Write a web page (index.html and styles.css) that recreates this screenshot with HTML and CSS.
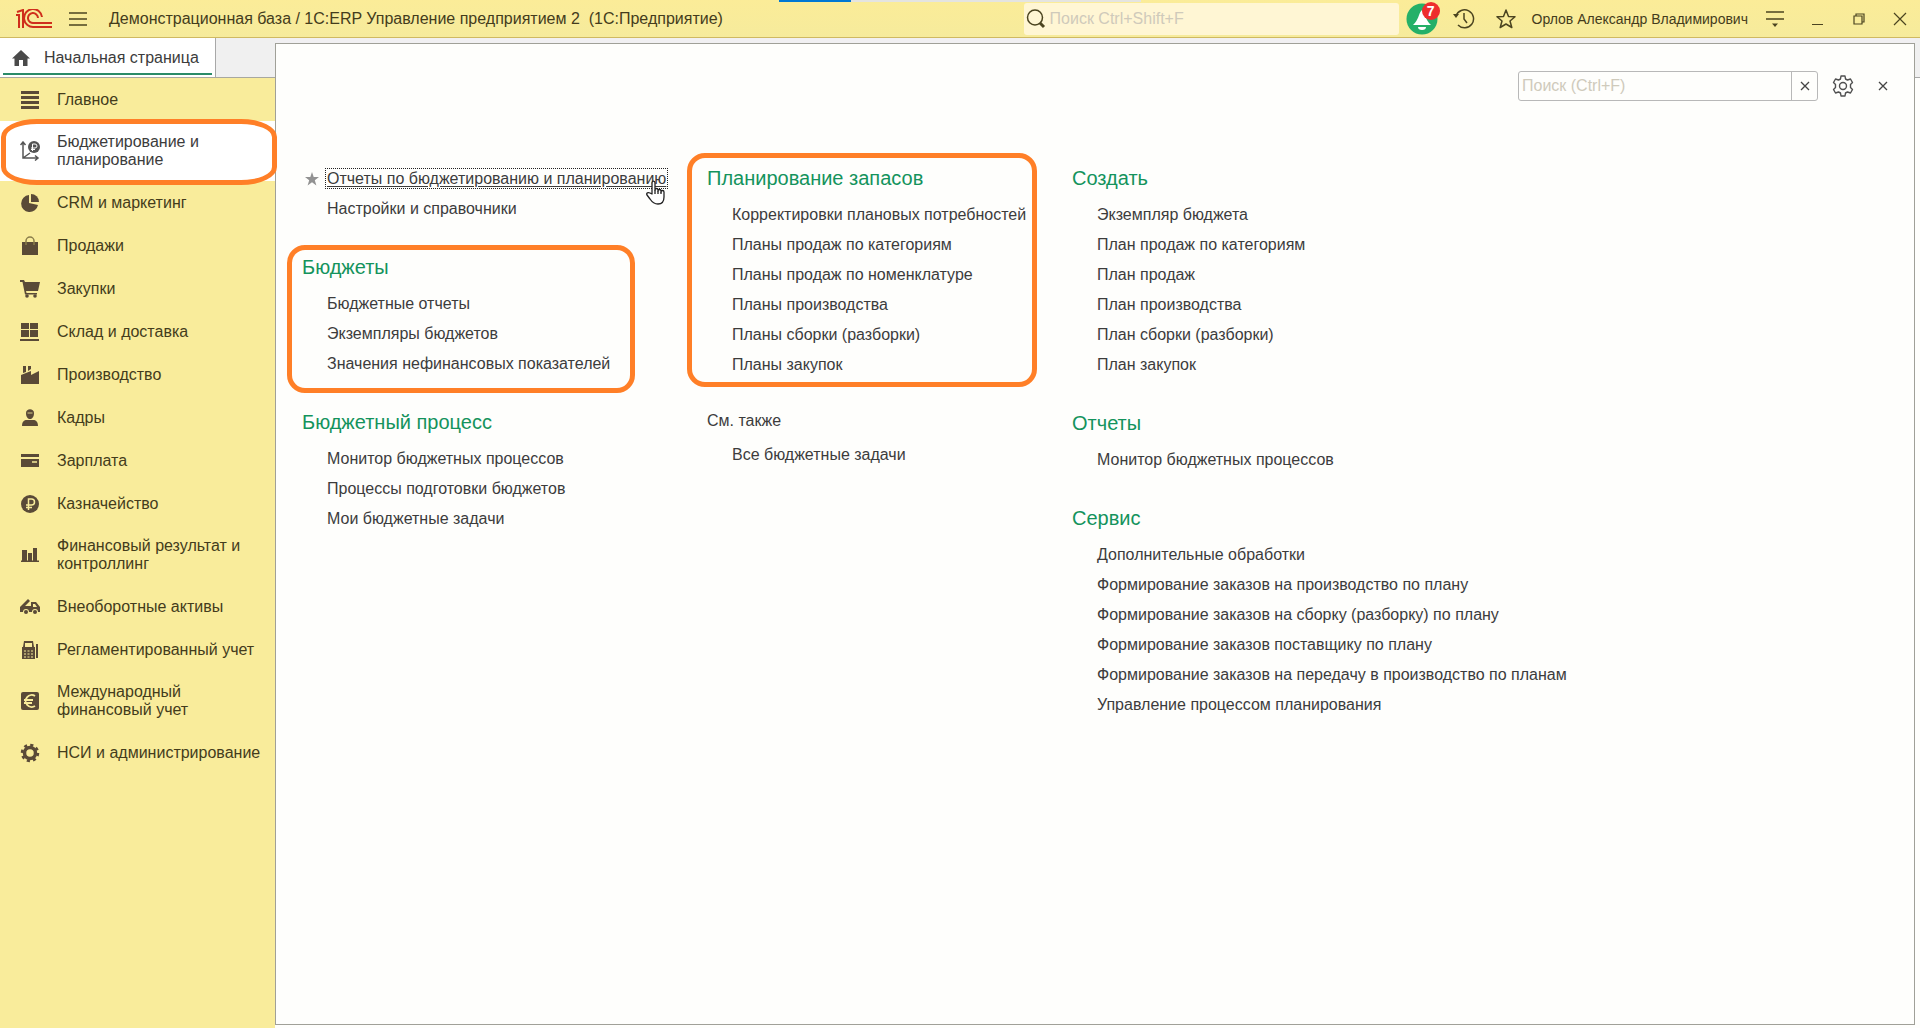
FILE: index.html
```html
<!DOCTYPE html>
<html lang="ru">
<head>
<meta charset="utf-8">
<title>1С:ERP Управление предприятием 2</title>
<link rel="stylesheet" href="styles.css">
</head>
<body>
<header class="topbar">
  <svg class="logo" width="36" height="20" viewBox="0 0 36 20" fill="none" stroke="#cf2e1c" stroke-width="2"><path d="M0 6H3V19M1 3L7 1V19" /><path d="M26 8A9 9 0 1 0 18 18H36M22 9A5 5 0 1 0 18 14H36"/></svg>
  <button class="icon-btn burger" aria-label="Меню"><svg width="20" height="16" viewBox="0 0 20 16" stroke="#4b4420" stroke-width="1.3"><path d="M1 2H19M1 8H19M1 14H19"/></svg></button>
  <h1 class="app-title">Демонстрационная база / 1С:ERP Управление предприятием 2&nbsp; (1С:Предприятие)</h1>
  <div class="progress" aria-hidden="true"></div>
  <label class="global-search">
    <svg width="20" height="20" viewBox="0 0 20 20" fill="none" stroke="#4b4420"><circle cx="9" cy="8.500" r="7.500" stroke-width="1.500"/><path d="M14 14L18 18" stroke-width="3"/></svg>
    <input type="text" placeholder="Поиск Ctrl+Shift+F" aria-label="Поиск">
  </label>
  <button class="icon-btn bell" aria-label="Уведомления"><svg width="32" height="32" viewBox="0 0 32 32"><circle cx="16" cy="16" r="15.500" fill="#24b068"/><path d="M16 7C12 11 13 17 7 22H25C19 17 20 11 16 7Z" fill="#fff"/><path d="M12 24H20A4 3 0 0 1 12 24Z" fill="#fff"/></svg><span class="badge">7</span></button>
  <button class="icon-btn" aria-label="История"><svg width="22" height="22" viewBox="0 0 22 22" fill="none" stroke="#4b4420" stroke-width="1.500"><path d="M3 8A9 9 0 1 1 5 17"/><path d="M11 5V11L14 15"/><path d="M0 6L6 6L3 10Z" fill="#4b4420" stroke="none"/></svg></button>
  <button class="icon-btn" aria-label="Избранное"><svg width="20" height="20" viewBox="0 0 20 20" fill="none" stroke="#4b4420" stroke-width="1.500" stroke-linejoin="round"><path d="M10 1L12.500 7.400L19 7.700L14 12L15.800 18.500L10 15L4.200 18.500L6 12L1 7.700L7.500 7.400Z"/></svg></button>
  <span class="user">Орлов Александр Владимирович</span>
  <button class="icon-btn" aria-label="Сервис и настройки"><svg width="20" height="18" viewBox="0 0 20 18" stroke="#4b4420" stroke-width="1.500"><path d="M1 2H19M1 9H19"/><path d="M7 13.500H13L10 17Z" fill="#4b4420" stroke="none"/></svg></button>
  <button class="icon-btn" aria-label="Свернуть"><svg width="12" height="12" viewBox="0 0 12 12" stroke="#4b4420"><path d="M1 11.500H12"/></svg></button>
  <button class="icon-btn" aria-label="Развернуть"><svg width="12" height="12" viewBox="0 0 12 12" fill="none" stroke="#4b4420" stroke-width="1.200"><path d="M1 3H9V11H1ZM3 3V1H11V9H9"/></svg></button>
  <button class="icon-btn window-close" aria-label="Закрыть окно"><svg width="14" height="14" viewBox="0 0 14 14" stroke="#4b4420" stroke-width="1.200"><path d="M1 1L13 13M13 1L1 13"/></svg></button>
</header>

<div class="workspace">
  <aside class="side">
    <div class="tabs">
      <a class="tab" href="#"><svg width="18" height="16" viewBox="0 0 18 16" fill="#4a4a4a"><path d="M9 0L18 8.500H15.500V16H11V10H7V16H2.500V8.500H0Z"/></svg><span>Начальная страница</span></a>
    </div>
    <nav class="sections">
      <a href="#"><svg viewBox="0 0 20 20"><path d="M1 1H19V4H1ZM1 6H19V9H1ZM1 11H19V14H1ZM1 16H19V19H1Z"/></svg><span>Главное</span></a>
      <a href="#" class="current marked"><svg viewBox="0 0 20 20"><path d="M3 1V17H17M0.500 4L3 1L5.500 4M15 14.500L18 17L15 19.500M3 17L10 12" fill="none" stroke="#555" stroke-width="1.500"/><circle cx="14" cy="6" r="6"/><path d="M12.500 10V3H15A2 2 0 0 1 15 7H11M11 8.500H15" fill="none" stroke="#fff"/></svg><span>Бюджетирование и планирование</span></a>
      <a href="#"><svg viewBox="0 0 20 20"><path d="M9 2A8.500 8.500 0 1 0 18 12L9 10Z"/><path d="M11 1A8 8 0 0 1 19 9H11Z"/></svg><span>CRM и маркетинг</span></a>
      <a href="#"><svg viewBox="0 0 20 20"><path d="M2 6H18V19H2Z"/><path d="M6 9V5A4 4 0 0 1 14 5V9" fill="none" stroke="#8a7d4a" stroke-width="1.500"/></svg><span>Продажи</span></a>
      <a href="#"><svg viewBox="0 0 20 20"><path d="M0 1H4L5 3H20L18 12H6L6.500 14H17V15.500H5L2.500 3H0Z"/><circle cx="7" cy="17" r="1.800"/><circle cx="15" cy="17" r="1.800"/></svg><span>Закупки</span></a>
      <a href="#"><svg viewBox="0 0 20 20"><path d="M1 1H9V7H1ZM10 1H18V7H10ZM1 8H9V15H1ZM10 8H18V15H10ZM0 17H19V19H0Z"/></svg><span>Склад и доставка</span></a>
      <a href="#"><svg viewBox="0 0 20 20"><path d="M1 19V10L11 6V10L19 6V19ZM3 1H6V7L3 8ZM8 1H11V4L8 6Z"/></svg><span>Производство</span></a>
      <a href="#"><svg viewBox="0 0 20 20"><path d="M6 5C6 0 14 0 14 5C14 9 12 11 10 11S6 9 6 5ZM2 18C2 12 6 12 7 12H13C14 12 18 12 18 18Z"/><path d="M7.500 5H12.500" stroke="#d7cb87"/></svg><span>Кадры</span></a>
      <a href="#"><svg viewBox="0 0 20 20"><path d="M1 3H19V6H1ZM1 8H19V16H1Z"/><path d="M12 11H17" stroke="#f9ec9b" stroke-width="1.500"/></svg><span>Зарплата</span></a>
      <a href="#"><svg viewBox="0 0 20 20"><circle cx="10" cy="10" r="9"/><path d="M8.500 16V5H11.500A3 3 0 0 1 11.500 11H6M6 13.500H12" fill="none" stroke="#f9ec9b" stroke-width="1.500"/></svg><span>Казначейство</span></a>
      <a href="#"><svg viewBox="0 0 20 20"><path d="M2 5H7V16H2ZM8 8H12V16H8ZM13 3H17V16H13ZM1 15.500H19V17H1Z"/></svg><span>Финансовый результат и контроллинг</span></a>
      <a href="#"><svg viewBox="0 0 20 20"><path d="M0 10L8 2L10 4L5 9H11V5H16L20 10V15H18A3 3 0 0 0 12 15H9A3 3 0 0 0 3 15H0ZM13 7V10H17L15 7Z" fill-rule="evenodd"/><circle cx="6" cy="15" r="2"/><circle cx="15" cy="15" r="2"/></svg><span>Внеоборотные активы</span></a>
      <a href="#"><svg viewBox="0 0 20 20"><path d="M4 1H13L14 7H15V19H2V7H3ZM5 3V7H12V3ZM16 4H18V18H16Z" fill-rule="evenodd"/><path d="M4 11H13M4 14H13M4 17H13" stroke="#f9ec9b" stroke-dasharray="2 1.500"/></svg><span>Регламентированный учет</span></a>
      <a href="#"><svg viewBox="0 0 20 20"><rect x="1" y="1" width="18" height="18" rx="2"/><path d="M15 5A6 6 0 1 0 15 15M4 9H13M4 12H12" fill="none" stroke="#f9ec9b" stroke-width="1.800"/></svg><span>Международный финансовый учет</span></a>
      <a href="#"><svg viewBox="0 0 20 20"><circle cx="10" cy="10" r="5.500" fill="none" stroke="#5a4a37" stroke-width="3.500"/><circle cx="10" cy="10" r="8" fill="none" stroke="#5a4a37" stroke-width="2.500" stroke-dasharray="3.140 3.140"/></svg><span>НСИ и администрирование</span></a>
    </nav>
  </aside>

  <main class="panel">
    <div class="panel-tools">
      <div class="panel-search">
        <input type="text" placeholder="Поиск (Ctrl+F)" aria-label="Поиск по разделу">
        <button aria-label="Очистить"><svg width="10" height="10" viewBox="0 0 10 10" stroke="#444" stroke-width="1.300"><path d="M1 1L9 9M9 1L1 9"/></svg></button>
      </div>
      <button class="tool" aria-label="Настройки"><svg width="22" height="22" viewBox="0 0 22 22" fill="none" stroke="#505050" stroke-width="1.400" stroke-linejoin="round"><path d="M9 1H13L13.500 4L15.500 5L18.500 4L20.500 7.500L18.500 9.500V12.500L20.500 14.500L18.500 18L15.500 17L13.500 18L13 21H9L8.500 18L6.500 17L3.500 18L1.500 14.500L3.500 12.500V9.500L1.500 7.500L3.500 4L6.500 5L8.500 4Z"/><circle cx="11" cy="11" r="3.500"/></svg></button>
      <button class="tool" aria-label="Закрыть"><svg width="10" height="10" viewBox="0 0 10 10" stroke="#444" stroke-width="1.300"><path d="M1 1L9 9M9 1L1 9"/></svg></button>
    </div>
    <div class="columns">
      <div class="column">
        <section class="group untitled">
          <ul>
            <li class="favorite"><svg class="fav-star" width="14" height="14" viewBox="0 0 14 14" fill="#929292"><path d="M7 0L8.700 5H14L9.800 8.200L11.400 13.500L7 10.300L2.600 13.500L4.200 8.200L0 5H5.300Z"/></svg><a href="#" class="focused">Отчеты по бюджетированию и планированию<svg class="pointer" width="20" height="25" viewBox="0 0 20 25" fill="#fff" stroke="#222" stroke-width="1.300" stroke-linejoin="round"><path d="M6 14V3C6 0.500 9 0.500 9 3V10C9 8 12 8 12 10V11C12 9 15 9 15 11V12C15 10 18 10 18 12V17C18 21 16 24 12 24C8 24 6 22 4 19L1 15C0 13 2 12 4 13Z"/><path d="M9 10V14M12 11V14M15 12V14"/></svg></a></li>
            <li><a href="#">Настройки и справочники</a></li>
          </ul>
        </section>
        <section class="group boxed boxed-budgets">
          <h2>Бюджеты</h2>
          <ul>
            <li><a href="#">Бюджетные отчеты</a></li>
            <li><a href="#">Экземпляры бюджетов</a></li>
            <li><a href="#">Значения нефинансовых показателей</a></li>
          </ul>
        </section>
        <section class="group">
          <h2>Бюджетный процесс</h2>
          <ul>
            <li><a href="#">Монитор бюджетных процессов</a></li>
            <li><a href="#">Процессы подготовки бюджетов</a></li>
            <li><a href="#">Мои бюджетные задачи</a></li>
          </ul>
        </section>
      </div>
      <div class="column">
        <section class="group boxed boxed-stock">
          <h2>Планирование запасов</h2>
          <ul>
            <li><a href="#">Корректировки плановых потребностей</a></li>
            <li><a href="#">Планы продаж по категориям</a></li>
            <li><a href="#">Планы продаж по номенклатуре</a></li>
            <li><a href="#">Планы производства</a></li>
            <li><a href="#">Планы сборки (разборки)</a></li>
            <li><a href="#">Планы закупок</a></li>
          </ul>
        </section>
        <section class="group see-also">
          <h2>См. также</h2>
          <ul>
            <li><a href="#">Все бюджетные задачи</a></li>
          </ul>
        </section>
      </div>
      <div class="column">
        <section class="group">
          <h2>Создать</h2>
          <ul>
            <li><a href="#">Экземпляр бюджета</a></li>
            <li><a href="#">План продаж по категориям</a></li>
            <li><a href="#">План продаж</a></li>
            <li><a href="#">План производства</a></li>
            <li><a href="#">План сборки (разборки)</a></li>
            <li><a href="#">План закупок</a></li>
          </ul>
        </section>
        <section class="group">
          <h2>Отчеты</h2>
          <ul>
            <li><a href="#">Монитор бюджетных процессов</a></li>
          </ul>
        </section>
        <section class="group">
          <h2>Сервис</h2>
          <ul>
            <li><a href="#">Дополнительные обработки</a></li>
            <li><a href="#">Формирование заказов на производство по плану</a></li>
            <li><a href="#">Формирование заказов на сборку (разборку) по плану</a></li>
            <li><a href="#">Формирование заказов поставщику по плану</a></li>
            <li><a href="#">Формирование заказов на передачу в производство по планам</a></li>
            <li><a href="#">Управление процессом планирования</a></li>
          </ul>
        </section>
      </div>
    </div>
  </main>
  <div class="edge" aria-hidden="true"></div>
</div>
</body>
</html>
```
FILE: styles.css
```css
* { box-sizing: border-box; }

body {
  margin: 0;
  min-height: 100vh;
  display: flex;
  flex-direction: column;
  font: 16px/18px "Liberation Sans", Arial, sans-serif;
  color: #3c3c3c;
  background: #fefefc;
}

a { color: inherit; text-decoration: none; }
button { padding: 0; border: 0; background: none; font: inherit; color: inherit; }
input { font: inherit; min-width: 0; border: 0; background: none; }
svg { display: block; flex: none; }
ul { list-style: none; margin: 0; padding: 0; }

/* Top bar */
.topbar {
  position: relative;
  display: flex;
  align-items: center;
  height: 38px;
  padding-left: 16px;
  background: linear-gradient(#fbec98, #f6eb9c);
  border-bottom: 1px solid #cfb962;
  color: #443c1c;
}
.burger { margin: 0 10px 0 5px; }
.app-title { margin: 0; font-size: 16px; font-weight: 400; white-space: nowrap; }
.progress {
  position: absolute;
  top: 0;
  left: 779px;
  width: 362px;
  height: 2px;
  background: linear-gradient(90deg, #0078d4 20%, #e4e4e0 20%);
}
.global-search {
  display: flex;
  align-items: center;
  width: 375px;
  height: 32px;
  margin-left: auto;
  margin-right: 2px;
  padding-left: 2px;
  background: #fff6d4;
  border-radius: 3px;
}
.global-search input { flex: 1; padding: 0 0 0 4px; outline: 0; }
input::placeholder { color: #cfcabb; opacity: 1; }
.icon-btn {
  position: relative;
  display: flex;
  align-items: center;
  justify-content: center;
  width: 42px;
  height: 34px;
  flex: none;
}
.window-close { width: 40px; }
.badge {
  position: absolute;
  top: 0;
  right: 3px;
  width: 18px;
  height: 18px;
  border-radius: 50%;
  background: #ee2d2d;
  color: #fff;
  font-size: 14px;
  font-weight: 700;
}
.user { margin: 0 6px 0 5px; font-size: 14px; white-space: nowrap; }

/* Work area */
.workspace { flex: 1; display: flex; }
.side {
  flex: none;
  width: 275px;
  display: flex;
  flex-direction: column;
  background: #f9ec9b;
}
.tabs {
  height: 40px;
  display: flex;
  background: #f0f0f0;
  border-bottom: 1px solid #a8a8a0;
}
.tab {
  position: relative;
  display: flex;
  align-items: center;
  gap: 14px;
  width: 216px;
  padding-left: 12px;
  background: #fff;
  border-right: 1px solid #a8a8a8;
}
.tab::after {
  content: "";
  position: absolute;
  left: 3px;
  right: 3px;
  bottom: 2px;
  height: 2px;
  background: #2b8b68;
}
.sections a {
  position: relative;
  display: flex;
  align-items: center;
  gap: 17px;
  min-height: 43px;
  padding: 11px 10px 11px 20px;
  color: #443c1c;
}
.sections span { padding: 1px 0; }
.sections svg { width: 20px; height: 20px; fill: #5a4a37; }
.sections .current { background: #fff; color: #3c3c3c; }
.sections .current span { max-width: 180px; }
.sections .current svg { fill: #555; }

/* Highlight frames */
.marked::after, .boxed::after {
  content: "";
  position: absolute;
  z-index: 2;
  border: 5px solid #ff7f27;
  border-radius: 18px;
  pointer-events: none;
}
.marked::after { inset: -2px -2px -4px 1px; border-radius: 36px / 18px; }
.boxed { position: relative; }
.boxed-budgets::after { inset: -1px 72px -14px -15px; }
.boxed-stock::after { inset: -4px 35px -7px -20px; }

/* Function panel */
.panel {
  flex: 1;
  margin: 5px 0 3px;
  padding: 27px 11px 30px 26px;
  background: #fefefc;
  border: 1px solid #a0a098;
  box-shadow: 0 -5px 0 #f1f0f2;
}
.edge {
  width: 5px;
  height: 40px;
  background: #f0f0f0;
  border-bottom: 1px solid #a8a8a8;
}
.panel-tools { display: flex; justify-content: flex-end; align-items: center; margin-bottom: 56px; }
.panel-search {
  display: flex;
  width: 300px;
  height: 30px;
  border: 1px solid #b8b8b8;
  border-radius: 3px;
  margin-right: 5px;
}
.panel-search input { flex: 1; padding: 0 3px; outline: 0; }
.panel-search button {
  width: 26px;
  display: grid;
  place-items: center;
  border-left: 1px solid #b8b8b8;
}
.tool { width: 40px; height: 30px; display: grid; place-items: center; }
.columns { display: grid; grid-template-columns: 405px 365px 1fr; }
.column { display: flex; flex-direction: column; gap: 22px; }
.untitled { padding-top: 7px; }
.group h2 {
  margin: 0;
  font-size: 20px;
  font-weight: 400;
  line-height: 43px;
  color: #14935c;
}
.group ul { padding-left: 25px; }
.group li { line-height: 30px; white-space: nowrap; }
.group.see-also h2 { font-size: 16px; line-height: 38px; color: #3c3c3c; }
.favorite { position: relative; }
.fav-star { position: absolute; left: -22px; top: 8px; }
.focused {
  position: relative;
  text-decoration: underline;
  text-underline-offset: 2px;
  outline: 1px dotted #222;
  outline-offset: 1px;
}
.pointer { position: absolute; right: 0; top: 10px; }
```
